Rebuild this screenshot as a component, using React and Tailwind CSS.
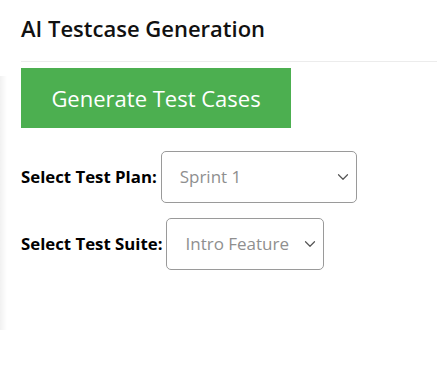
import { ChevronDown } from 'lucide-react';

function SelectBox({ value, width }) {
  return (
    <div
      className={`${width} h-[52px] flex items-center justify-between pl-[18px] pr-[4px] border border-[#9a9a9a] rounded-[5px] bg-white`}
    >
      <span className="text-[17px] text-[#8f8f8f]">{value}</span>
      <ChevronDown size={18} strokeWidth={1.6} className="text-[#555]" />
    </div>
  );
}

export default function App() {
  return (
    <div className="relative w-[437px] h-[392px] bg-white overflow-hidden font-['Open_Sans',sans-serif]">
      {/* faint shadow of the panel on the left */}
      <div className="absolute left-0 top-[76px] w-[7px] h-[254px] bg-gradient-to-r from-[#f1f1f1] to-white" />

      <div className="relative pl-[21px] pt-[13px]">
        <h1 className="text-[22px] font-semibold text-[#111] leading-[30px]">AI Testcase Generation</h1>
        <div className="mt-[18px] h-px bg-[#ececec]" />

        <button className="mt-[6px] w-[270px] h-[60px] bg-[#4caf50] text-white text-[22px] leading-none">
          Generate Test Cases
        </button>

        <div className="mt-[23px] flex items-center gap-[4px]">
          <span className="text-[16.8px] font-bold text-black">Select Test Plan:</span>
          <SelectBox value="Sprint 1" width="w-[196px]" />
        </div>

        <div className="mt-[15px] flex items-center gap-[4px]">
          <span className="text-[16.8px] font-bold text-black">Select Test Suite:</span>
          <SelectBox value="Intro Feature" width="w-[158px]" />
        </div>
      </div>
    </div>
  );
}
